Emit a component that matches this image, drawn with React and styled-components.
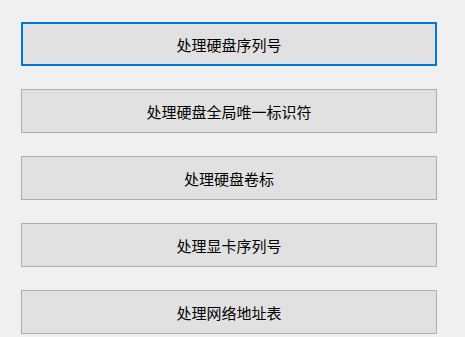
import React from 'react';
import styled, { createGlobalStyle } from 'styled-components';

const GlobalStyle = createGlobalStyle`
  html, body {
    margin: 0;
    padding: 0;
    background: #f0f0f0;
  }
  body {
    width: 465px;
    height: 337px;
    overflow: hidden;
    font-family: "Noto Sans CJK SC", "Microsoft YaHei", sans-serif;
  }
`;

const Panel = styled.div`
  display: flex;
  flex-direction: column;
  gap: 23px;
  padding: 22px 0 0 21px;
`;

const ActionButton = styled.button`
  box-sizing: border-box;
  width: 416px;
  height: 44px;
  margin: 0;
  padding: 0;
  background: #e1e1e1;
  border: ${(p) => (p.$focused ? '2px solid #0078d7' : '1px solid #adadad')};
  border-radius: 0;
  color: #000;
  font-family: "Noto Sans CJK SC", sans-serif;
  font-size: 15px;
  line-height: 1;
  display: flex;
  align-items: center;
  justify-content: center;
  cursor: default;
  outline: none;
`;

const actions = [
  '处理硬盘序列号',
  '处理硬盘全局唯一标识符',
  '处理硬盘卷标',
  '处理显卡序列号',
  '处理网络地址表',
];

export default function App() {
  return (
    <>
      <GlobalStyle />
      <Panel>
        {actions.map((label, i) => (
          <ActionButton key={label} $focused={i === 0}>
            {label}
          </ActionButton>
        ))}
      </Panel>
    </>
  );
}
